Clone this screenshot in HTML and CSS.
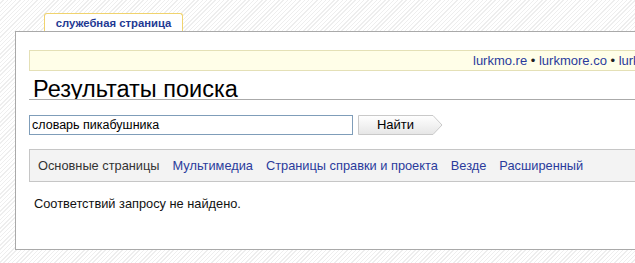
FILE: index.html
```html
<!DOCTYPE html>
<html lang="ru">
<head>
<meta charset="utf-8">
<title>Результаты поиска</title>
<link rel="stylesheet" href="styles.css">
</head>
<body>
<div class="page">
  <div class="tab">служебная страница</div>
  <div class="panel">
    <div class="sitebar">
      <span class="mirrors"><a href="#">lurkmo.re</a> • <a href="#">lurkmore.co</a> • <a href="#">lurkmore.so</a> • <a href="#">lurkmore.to</a></span>
    </div>
    <h1 class="title">Результаты поиска</h1>
    <form class="search">
      <input class="query" type="text" value="словарь пикабушника">
      <button class="go" type="button">
        <svg class="go-bg" width="85" height="20" viewBox="0 0 85 20">
          <defs>
            <linearGradient id="g" x1="0" y1="0" x2="0" y2="1">
              <stop offset="0" stop-color="#ffffff"/>
              <stop offset="1" stop-color="#e6e6e6"/>
            </linearGradient>
          </defs>
          <path d="M0.5 0.5 H75 L84 10 L75 19.5 H0.5 Z" fill="url(#g)" stroke="#c9c9c9"/>
        </svg>
        <span class="go-label">Найти</span>
      </button>
    </form>
    <div class="nsbar">
      <span class="ns current">Основные страницы</span>
      <a class="ns" href="#">Мультимедиа</a>
      <a class="ns" href="#">Страницы справки и проекта</a>
      <a class="ns" href="#">Везде</a>
      <a class="ns" href="#">Расширенный</a>
    </div>
    <p class="result">Соответствий запросу не найдено.</p>
  </div>
</div>
</body>
</html>
```

FILE: styles.css
```css
html, body {
  margin: 0;
  padding: 0;
  overflow: hidden;
}
body {
  font-family: "Liberation Sans", Arial, sans-serif;
  background: #ffffff repeating-linear-gradient(135deg, #ffffff 0, #ffffff 2px, #eeeeee 2px, #eeeeee 3px);
  width: 635px;
  height: 263px;
}
a {
  color: #2a3b9c;
  text-decoration: none;
}
.page {
  padding: 13px 0 0 15px;
}
.tab {
  margin-left: 29px;
  width: 137px;
  height: 17px;
  border: 1px solid #f0d36e;
  border-bottom: none;
  border-radius: 3px 3px 0 0;
  background: #ffffff;
  color: #1f3a93;
  font-size: 11.3px;
  font-weight: bold;
  line-height: 18px;
  text-align: center;
}
.panel {
  width: 700px;
  height: 199px;
  border: 1px solid #a9a9a9;
  border-right: none;
  background: #ffffff;
  padding: 18px 0 0 13px;
}
.sitebar {
  display: flex;
  height: 19px;
  border: 1px solid #e4e0b6;
  border-right: none;
  background: #fffee8;
  font-size: 13px;
  line-height: 19px;
  padding-left: 443px;
  white-space: nowrap;
  color: #222;
}
.title {
  margin: 8px 0 0 0;
  height: 20px;
  overflow: hidden;
  font-size: 23.5px;
  font-weight: normal;
  line-height: 20px;
  color: #000;
  padding-left: 4px;
  border-bottom: 1px solid #aaaaaa;
}
.search {
  display: flex;
  align-items: center;
  margin: 15px 0 0 0;
}
.query {
  box-sizing: border-box;
  width: 324px;
  height: 20px;
  margin: 0;
  border: 1px solid #7f9db9;
  padding: 0 2px;
  font-family: "Liberation Sans", Arial, sans-serif;
  font-size: 12.5px;
  color: #000;
  background: #fff;
}
.go {
  position: relative;
  width: 85px;
  height: 20px;
  margin: 0 0 0 5px;
  padding: 0 10px 0 0;
  border: none;
  background: none;
  font-family: "Liberation Sans", Arial, sans-serif;
  font-size: 13px;
  color: #000;
}
.go-bg {
  position: absolute;
  left: 0;
  top: 0;
}
.go-label {
  position: relative;
  line-height: 20px;
}
.nsbar {
  display: flex;
  gap: 13px;
  margin-top: 14px;
  height: 31px;
  border: 1px solid #c6c6c6;
  border-right: none;
  background: #f3f3f3;
  padding-left: 8px;
  font-size: 12.8px;
  line-height: 31px;
  white-space: nowrap;
}
.ns.current {
  color: #333333;
}
.result {
  margin: 14px 0 0 0;
  padding-left: 5px;
  font-size: 12.8px;
  line-height: 16px;
  color: #111;
}
```
